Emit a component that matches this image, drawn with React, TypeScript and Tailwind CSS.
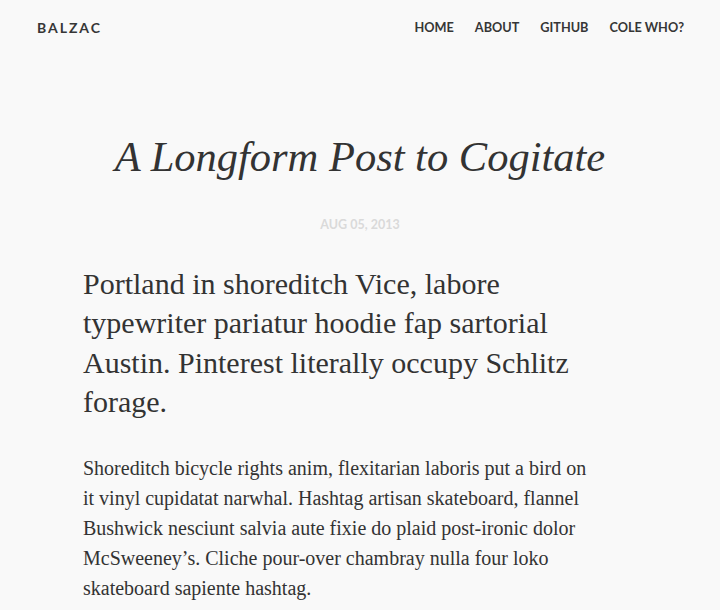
const navLinks = ["Home", "About", "GitHub", "Cole Who?"];

export default function App() {
  return (
    <div className="min-h-[610px] bg-[#f9f9f9] text-[#333]">
      <header className="flex h-[54px] items-center justify-between pl-[37px] pr-9">
        <a
          href="#top"
          className="font-['Lato',sans-serif] text-[14px] font-bold uppercase tracking-[0.14em] text-[#363636]"
        >
          Balzac
        </a>
        <nav className="flex items-center gap-[21px] pt-[2px]">
          {navLinks.map((l) => (
            <a
              key={l}
              href="#"
              className="font-['Lato',sans-serif] text-[12.7px] font-bold uppercase text-[#363636]"
            >
              {l}
            </a>
          ))}
        </nav>
      </header>

      <main className="mx-auto w-[554px] pt-[77px] font-['Liberation_Serif',serif]">
        <h1 className="text-center text-[42.5px] italic leading-[52px] text-[#333]">
          A Longform Post to Cogitate
        </h1>
        <p className="mt-[33px] text-center font-['Lato',sans-serif] text-[12.5px] font-bold uppercase text-[#dadada]">
          Aug 05, 2013
        </p>
        <div className="max-w-[512px]">
          <p className="mt-[29px] text-[30px] leading-[39.5px] text-[#333]">
            Portland in shoreditch Vice, labore typewriter pariatur hoodie fap
            sartorial Austin. Pinterest literally occupy Schlitz forage.
          </p>
          <p className="mt-[31px] text-[20px] leading-[30px] text-[#333]">
            Shoreditch bicycle rights anim, flexitarian laboris put a bird on it
            vinyl cupidatat narwhal. Hashtag artisan skateboard, flannel Bushwick
            nesciunt salvia aute fixie do plaid post-ironic dolor McSweeney’s.
            Cliche pour-over chambray nulla four loko skateboard sapiente hashtag.
          </p>
        </div>
      </main>
    </div>
  );
}
